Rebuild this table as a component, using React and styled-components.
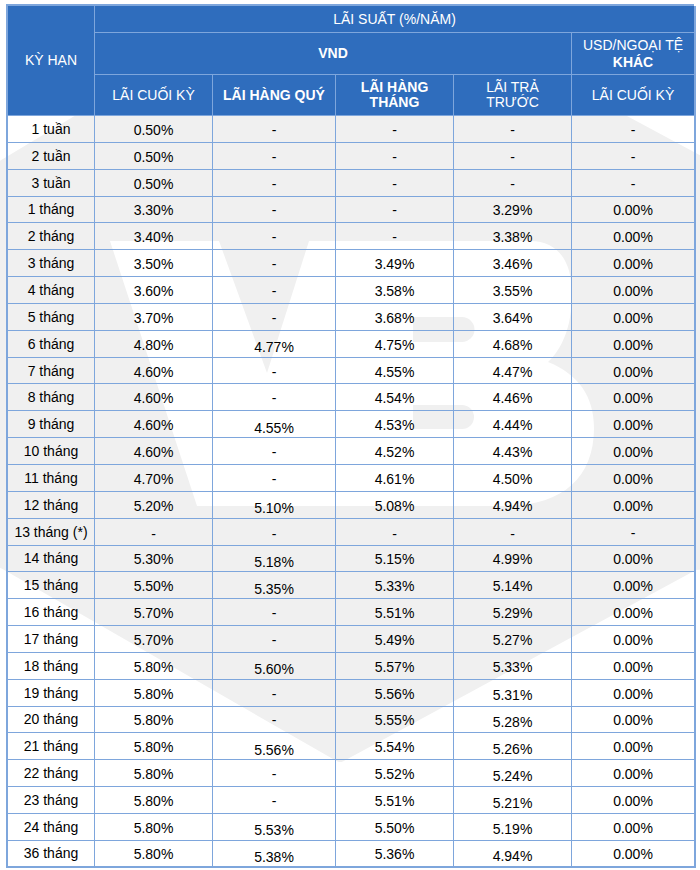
import React from 'react';
import styled, { createGlobalStyle } from 'styled-components';

const GlobalStyle = createGlobalStyle`
  html, body {
    margin: 0;
    padding: 0;
    background: #ffffff;
  }
  body {
    font-family: "Liberation Sans", Arial, sans-serif;
    color: #000;
  }
`;

const Page = styled.div`
  position: relative;
  width: 700px;
  height: 870px;
  padding: 4px 6px 0;
  box-sizing: border-box;
  overflow: hidden;
`;

const Watermark = styled.svg`
  position: absolute;
  left: 0;
  top: 0;
  width: 700px;
  height: 870px;
  z-index: 0;
`;

const Sheet = styled.div`
  position: relative;
  z-index: 1;
  display: grid;
  grid-template-columns: 87px 118px 123px 118px 118px 124px;
  grid-template-rows: 27px 42px 41px repeat(28, 26.857px);
  width: 688px;
  box-sizing: border-box;
  border-top: 2px solid #7ea6dc;
  border-left: 2px solid #7ea6dc;
`;

const HeadCell = styled.div`
  grid-column: ${p => p.col || 'auto'};
  grid-row: ${p => p.row || 'auto'};
  display: flex;
  align-items: center;
  justify-content: center;
  text-align: center;
  padding: 0 6px;
  background: #2f6dbd;
  color: #ffffff;
  font-size: 14px;
  line-height: ${p => p.lh || 17}px;
  font-weight: ${p => (p.bold ? 700 : 400)};
  border-right: 1px solid #7ea6dc;
  border-bottom: 1px solid #7ea6dc;
  box-sizing: border-box;
  ${p => p.last && 'border-right-width: 2px;'}

  b {
    font-weight: 700;
  }
`;

const Cell = styled.div`
  display: flex;
  align-items: center;
  justify-content: center;
  font-size: 14px;
  line-height: 16px;
  color: #000;
  padding-top: ${p => 2 + (p.drop || 0)}px;
  padding-bottom: ${p => (p.label ? 2 : 0)}px;
  border-right: ${p => (p.last ? 2 : 1)}px solid #7ea6dc;
  border-bottom: ${p => (p.bottom ? 2 : 1)}px solid #7ea6dc;
  box-sizing: border-box;
  white-space: nowrap;
`;

const rows = [
  ['1 tuần', '0.50%', '-', '-', '-', '-'],
  ['2 tuần', '0.50%', '-', '-', '-', '-'],
  ['3 tuần', '0.50%', '-', '-', '-', '-'],
  ['1 tháng', '3.30%', '-', '-', '3.29%', '0.00%'],
  ['2 tháng', '3.40%', '-', '-', '3.38%', '0.00%'],
  ['3 tháng', '3.50%', '-', '3.49%', '3.46%', '0.00%'],
  ['4 tháng', '3.60%', '-', '3.58%', '3.55%', '0.00%'],
  ['5 tháng', '3.70%', '-', '3.68%', '3.64%', '0.00%'],
  ['6 tháng', '4.80%', '4.77%', '4.75%', '4.68%', '0.00%'],
  ['7 tháng', '4.60%', '-', '4.55%', '4.47%', '0.00%'],
  ['8 tháng', '4.60%', '-', '4.54%', '4.46%', '0.00%'],
  ['9 tháng', '4.60%', '4.55%', '4.53%', '4.44%', '0.00%'],
  ['10 tháng', '4.60%', '-', '4.52%', '4.43%', '0.00%'],
  ['11 tháng', '4.70%', '-', '4.61%', '4.50%', '0.00%'],
  ['12 tháng', '5.20%', '5.10%', '5.08%', '4.94%', '0.00%'],
  ['13 tháng (*)', '-', '-', '-', '-', '-'],
  ['14 tháng', '5.30%', '5.18%', '5.15%', '4.99%', '0.00%'],
  ['15 tháng', '5.50%', '5.35%', '5.33%', '5.14%', '0.00%'],
  ['16 tháng', '5.70%', '-', '5.51%', '5.29%', '0.00%'],
  ['17 tháng', '5.70%', '-', '5.49%', '5.27%', '0.00%'],
  ['18 tháng', '5.80%', '5.60%', '5.57%', '5.33%', '0.00%'],
  ['19 tháng', '5.80%', '-', '5.56%', '5.31%', '0.00%'],
  ['20 tháng', '5.80%', '-', '5.55%', '5.28%', '0.00%'],
  ['21 tháng', '5.80%', '5.56%', '5.54%', '5.26%', '0.00%'],
  ['22 tháng', '5.80%', '-', '5.52%', '5.24%', '0.00%'],
  ['23 tháng', '5.80%', '-', '5.51%', '5.21%', '0.00%'],
  ['24 tháng', '5.80%', '5.53%', '5.50%', '5.19%', '0.00%'],
  ['36 tháng', '5.80%', '5.38%', '5.36%', '4.94%', '0.00%'],
];

// some cells in the source sit a few px lower than the rest of the row
function dropFor(r, c, value) {
  if (rows[r][0].startsWith('13') && c >= 1 && c <= 4) return 3;
  if (c === 2 && value !== '-') return 5;
  if (c === 4 && r >= 21) return 3;
  return 0;
}

function VBMark() {
  return (
    <Watermark viewBox="0 0 700 870" aria-hidden="true">
      <polygon
        points="123,95 573,95 720,174 720,562 694,563 340,755 6,563 0,560 0,169"
        fill="#f0f0f0"
        stroke="#f0f0f0"
        strokeWidth="14"
        strokeLinejoin="round"
      />
      <path
        d="M110,241 L219,241 L267,373 L309,241 L530,241
           C560,241 572,264 572,294 C572,328 561,350 548,362
           C578,374 594,396 594,428 C594,478 562,506 505,506
           L197,506 Z"
        fill="#ffffff"
      />
      <path d="M413,317 H462 A12.5,12.5 0 0 1 462,342 H413 Z" fill="#f0f0f0" />
      <path d="M413,405 H462 A12,12 0 0 1 462,429 H413 Z" fill="#f0f0f0" />
    </Watermark>
  );
}

export default function App() {
  return (
    <Page>
      <GlobalStyle />
      <VBMark />
      <Sheet>
        <HeadCell col="1" row="1 / span 3">KỲ HẠN</HeadCell>
        <HeadCell col="2 / span 5" row="1" last>LÃI SUẤT (%/NĂM)</HeadCell>
        <HeadCell col="2 / span 4" row="2" bold>VND</HeadCell>
        <HeadCell col="6" row="2" last>
          <span>USD/NGOẠI TỆ<br /><b>KHÁC</b></span>
        </HeadCell>
        <HeadCell col="2" row="3">LÃI CUỐI KỲ</HeadCell>
        <HeadCell col="3" row="3" bold>LÃI HÀNG QUÝ</HeadCell>
        <HeadCell col="4" row="3" bold lh={15}>LÃI HÀNG<br />THÁNG</HeadCell>
        <HeadCell col="5" row="3" lh={15}>LÃI TRẢ<br />TRƯỚC</HeadCell>
        <HeadCell col="6" row="3" last>LÃI CUỐI KỲ</HeadCell>

        {rows.map((row, r) =>
          row.map((value, c) => (
            <Cell
              key={`${r}-${c}`}
              label={c === 0}
              last={c === 5}
              bottom={r === rows.length - 1}
              drop={dropFor(r, c, value)}
            >
              {value}
            </Cell>
          ))
        )}
      </Sheet>
    </Page>
  );
}
